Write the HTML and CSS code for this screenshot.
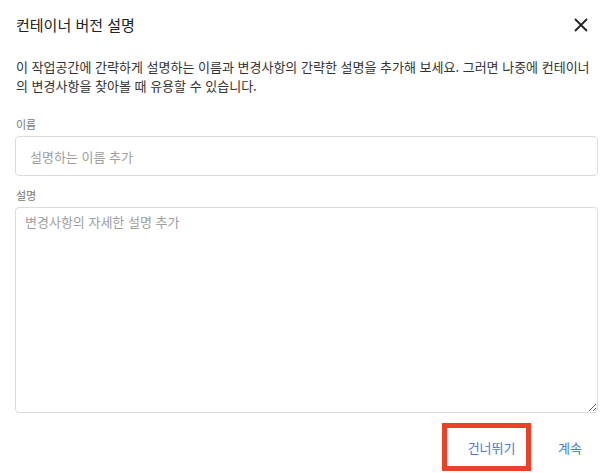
FILE: index.html
```html
<!DOCTYPE html>
<html lang="ko">
<head>
<meta charset="utf-8">
<link rel="stylesheet" href="styles.css">
</head>
<body>
<div class="dialog">
  <div class="header">
    <h1 class="title">컨테이너 버전 설명</h1>
    <button class="close" aria-label="닫기">
      <svg width="14" height="14" viewBox="0 0 14 14"><path d="M1 1 L13 13 M13 1 L1 13" stroke="#222" stroke-width="1.8" fill="none"/></svg>
    </button>
  </div>
  <p class="intro">이 작업공간에 간략하게 설명하는 이름과 변경사항의 간략한 설명을 추가해 보세요. 그러면 나중에 컨테이너의 변경사항을 찾아볼 때 유용할 수 있습니다.</p>
  <div class="field field-name">
    <label class="label">이름</label>
    <input class="input" type="text" placeholder="설명하는 이름 추가">
  </div>
  <div class="field field-desc">
    <label class="label">설명</label>
    <textarea class="textarea" placeholder="변경사항의 자세한 설명 추가"></textarea>
  </div>
  <div class="actions">
    <button class="btn btn-skip">건너뛰기</button>
    <button class="btn btn-next">계속</button>
  </div>
</div>
</body>
</html>
```
FILE: styles.css
```css
html, body {
  margin: 0;
  padding: 0;
  background: #fff;
}
body {
  font-family: "Noto Sans CJK KR", "Noto Sans", sans-serif;
  color: #212121;
}
.dialog {
  width: 604px;
  height: 473px;
  box-sizing: border-box;
  padding: 0 6px 0 15px;
  display: flex;
  flex-direction: column;
}
.header {
  display: flex;
  align-items: center;
  justify-content: space-between;
  height: 48px;
  padding-right: 10px;
}
.title {
  margin: 0 0 0 1px;
  font-size: 15px;
  font-weight: 400;
  color: #212121;
}
.close {
  border: none;
  background: none;
  padding: 0;
  margin-top: 2px;
  width: 14px;
  height: 14px;
  display: flex;
  cursor: pointer;
}
.intro {
  margin: 9px 0 0 1px;
  font-size: 13px;
  line-height: 19px;
  color: #333;
}
.field {
  display: flex;
  flex-direction: column;
}
.field-name {
  margin-top: 22px;
}
.field-desc {
  margin-top: 12px;
}
.label {
  font-size: 11px;
  line-height: 14px;
  color: #777;
  margin: 0 0 5px 1px;
}
.input, .textarea {
  font-family: inherit;
  font-size: 13px;
  color: #212121;
  border: 1px solid #dadce0;
  border-radius: 4px;
  box-sizing: border-box;
  width: 583px;
  outline: none;
}
.input {
  height: 40px;
  padding: 0 14px;
}
.textarea {
  height: 206px;
  padding: 5px 9px;
  resize: vertical;
  line-height: 18px;
}
.input::placeholder, .textarea::placeholder {
  color: #9e9e9e;
}
.actions {
  display: flex;
  justify-content: flex-end;
  align-items: center;
  margin-top: 10px;
  gap: 11px;
}
.btn {
  font-family: inherit;
  font-size: 13px;
  color: #4a7bd1;
  background: none;
  border: none;
  cursor: pointer;
}
.btn-skip {
  box-sizing: border-box;
  width: 89px;
  height: 48px;
  border: 5px solid #e9412a;
  padding: 0 0 0 10px;
}
.btn-next {
  padding: 0 16px;
  height: 38px;
}
```
